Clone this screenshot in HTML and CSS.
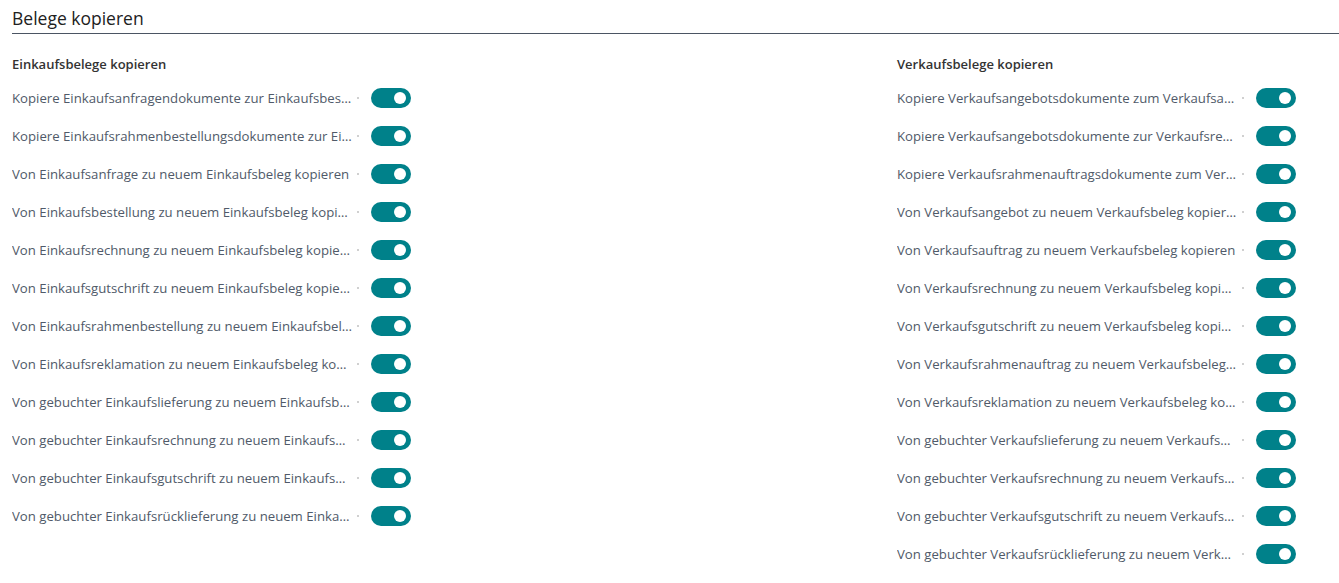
FILE: index.html
```html
<!DOCTYPE html>
<html lang="de">
<head>
    <meta charset="UTF-8">
    <meta name="viewport" content="width=device-width, initial-scale=1.0">
    <title>Belege kopieren</title>
    <link rel="stylesheet" href="styles.css">
</head>
<body>
    <h1 class="page-title">Belege kopieren</h1>
    <div class="groups">
        <section class="group">
            <h2 class="group-title">Einkaufsbelege kopieren</h2>
            <div class="field"><span class="label">Kopiere Einkaufsanfragendokumente zur Einkaufsbestellung</span><span class="dot"></span><span class="toggle"></span></div>
            <div class="field"><span class="label">Kopiere Einkaufsrahmenbestellungsdokumente zur Einkaufsbestellung</span><span class="dot"></span><span class="toggle"></span></div>
            <div class="field"><span class="label">Von Einkaufsanfrage zu neuem Einkaufsbeleg kopieren</span><span class="dot"></span><span class="toggle"></span></div>
            <div class="field"><span class="label">Von Einkaufsbestellung zu neuem Einkaufsbeleg kopieren</span><span class="dot"></span><span class="toggle"></span></div>
            <div class="field"><span class="label">Von Einkaufsrechnung zu neuem Einkaufsbeleg kopieren</span><span class="dot"></span><span class="toggle"></span></div>
            <div class="field"><span class="label">Von Einkaufsgutschrift zu neuem Einkaufsbeleg kopieren</span><span class="dot"></span><span class="toggle"></span></div>
            <div class="field"><span class="label">Von Einkaufsrahmenbestellung zu neuem Einkaufsbeleg kopieren</span><span class="dot"></span><span class="toggle"></span></div>
            <div class="field"><span class="label">Von Einkaufsreklamation zu neuem Einkaufsbeleg kopieren</span><span class="dot"></span><span class="toggle"></span></div>
            <div class="field"><span class="label">Von gebuchter Einkaufslieferung zu neuem Einkaufsbeleg kopieren</span><span class="dot"></span><span class="toggle"></span></div>
            <div class="field"><span class="label">Von gebuchter Einkaufsrechnung zu neuem Einkaufsbeleg kopieren</span><span class="dot"></span><span class="toggle"></span></div>
            <div class="field"><span class="label">Von gebuchter Einkaufsgutschrift zu neuem Einkaufsbeleg kopieren</span><span class="dot"></span><span class="toggle"></span></div>
            <div class="field"><span class="label">Von gebuchter Einkaufsrücklieferung zu neuem Einkaufsbeleg kopieren</span><span class="dot"></span><span class="toggle"></span></div>
        </section>
        <section class="group">
            <h2 class="group-title">Verkaufsbelege kopieren</h2>
            <div class="field"><span class="label">Kopiere Verkaufsangebotsdokumente zum Verkaufsauftrag</span><span class="dot"></span><span class="toggle"></span></div>
            <div class="field"><span class="label">Kopiere Verkaufsangebotsdokumente zur Verkaufsrechnung</span><span class="dot"></span><span class="toggle"></span></div>
            <div class="field"><span class="label">Kopiere Verkaufsrahmenauftragsdokumente zum Verkaufsauftrag</span><span class="dot"></span><span class="toggle"></span></div>
            <div class="field"><span class="label">Von Verkaufsangebot zu neuem Verkaufsbeleg kopieren</span><span class="dot"></span><span class="toggle"></span></div>
            <div class="field"><span class="label">Von Verkaufsauftrag zu neuem Verkaufsbeleg kopieren</span><span class="dot"></span><span class="toggle"></span></div>
            <div class="field"><span class="label">Von Verkaufsrechnung zu neuem Verkaufsbeleg kopieren</span><span class="dot"></span><span class="toggle"></span></div>
            <div class="field"><span class="label">Von Verkaufsgutschrift zu neuem Verkaufsbeleg kopieren</span><span class="dot"></span><span class="toggle"></span></div>
            <div class="field"><span class="label">Von Verkaufsrahmenauftrag zu neuem Verkaufsbeleg kopieren</span><span class="dot"></span><span class="toggle"></span></div>
            <div class="field"><span class="label">Von Verkaufsreklamation zu neuem Verkaufsbeleg kopieren</span><span class="dot"></span><span class="toggle"></span></div>
            <div class="field"><span class="label">Von gebuchter Verkaufslieferung zu neuem Verkaufsbeleg kopieren</span><span class="dot"></span><span class="toggle"></span></div>
            <div class="field"><span class="label">Von gebuchter Verkaufsrechnung zu neuem Verkaufsbeleg kopieren</span><span class="dot"></span><span class="toggle"></span></div>
            <div class="field"><span class="label">Von gebuchter Verkaufsgutschrift zu neuem Verkaufsbeleg kopieren</span><span class="dot"></span><span class="toggle"></span></div>
            <div class="field"><span class="label">Von gebuchter Verkaufsrücklieferung zu neuem Verkaufsbeleg kopieren</span><span class="dot"></span><span class="toggle"></span></div>
        </section>
    </div>
</body>
</html>
```

FILE: styles.css
```css
body {
    margin: 0;
    padding: 0 0 0 12px;
    font-family: "Open Sans", "Noto Sans", sans-serif;
    background-color: #fff;
    color: #212121;
}
.page-title {
    margin: 0;
    padding-top: 6px;
    height: 27px;
    font-size: 17.5px;
    font-weight: 400;
    line-height: 24px;
    color: #212121;
    border-bottom: 1px solid #4b5563;
}
.groups {
    display: grid;
    grid-template-columns: 885px 1fr;
    padding-top: 19px;
}
.group-title {
    margin: 0 0 4px 0;
    height: 22px;
    font-size: 13px;
    font-weight: 600;
    line-height: 22px;
    color: #333;
}
.field {
    display: flex;
    align-items: center;
    height: 38px;
}
.label {
    width: 341px;
    font-size: 13.2px;
    color: #505a69;
    white-space: nowrap;
    overflow: hidden;
    text-overflow: ellipsis;
}
.dot {
    width: 2px;
    height: 2px;
    margin-left: 4px;
    background-color: #d0d0d0;
}
.toggle {
    position: relative;
    width: 40px;
    height: 20px;
    margin-left: 12px;
    border-radius: 10px;
    background-color: #00818a;
}
/* knob sits at the right end: switch is on */
.toggle::after {
    content: "";
    position: absolute;
    top: 4px;
    right: 5px;
    width: 12px;
    height: 12px;
    border-radius: 50%;
    background-color: #fff;
}
```
